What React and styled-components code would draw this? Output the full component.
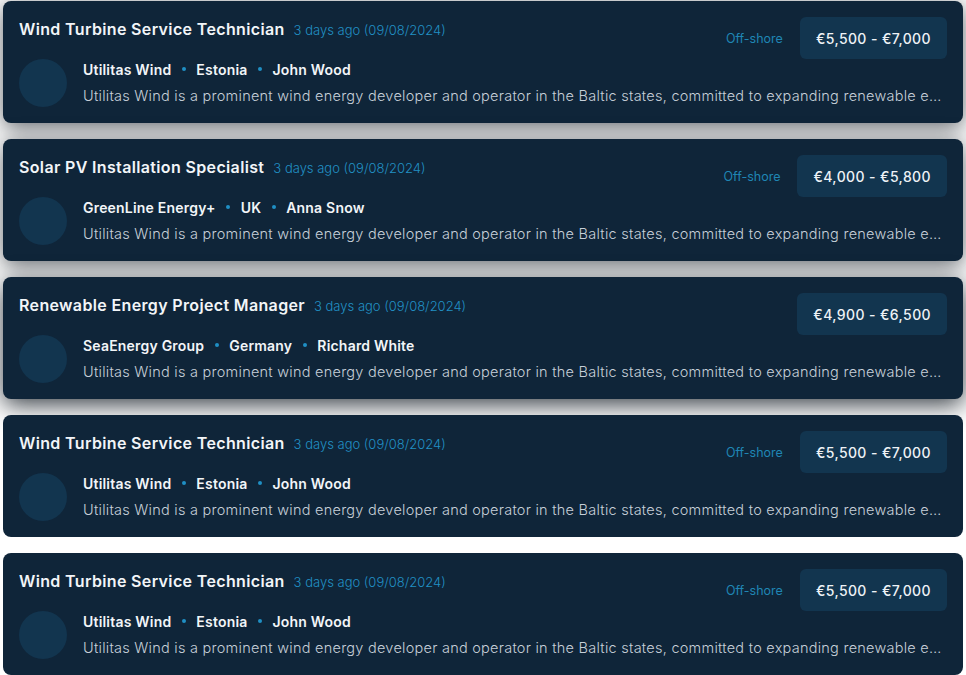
import React from "react";
import styled, { createGlobalStyle, css } from "styled-components";

const GlobalStyle = createGlobalStyle`
	* {
		box-sizing: border-box;
	}
	body {
		margin: 0;
		background: #ffffff;
		font-family: "Inter", "Noto Sans", sans-serif;
	}
`;

const ListStyled = styled.div`
	display: flex;
	flex-direction: column;
	gap: 16px;
	padding: 1px 3px 0;
`;

const shadows = {
	soft: css`
		box-shadow: 0 4px 22px rgba(20, 28, 36, 0.68);
	`,
	strong: css`
		box-shadow: 0 6px 24px rgba(20, 28, 36, 0.85);
	`,
};

const CardStyled = styled.div`
	position: relative;
	height: 122px;
	padding: 16px;
	border-radius: 8px;
	background: #0f2539;
	display: flex;
	flex-direction: column;
	${({ $shadow }) => shadows[$shadow]}
`;

const HeaderStyled = styled.div`
	display: flex;
	justify-content: space-between;
	align-items: flex-start;
	height: 42px;
`;

const TitleGroup = styled.div`
	display: flex;
	align-items: baseline;
	gap: 9px;
	height: 24px;
	line-height: 24px;
`;

const Title = styled.h3`
	margin: 0;
	font-size: 16px;
	font-weight: 600;
	letter-spacing: 0.35px;
	color: #f2f5f8;
`;

const Posted = styled.span`
	font-size: 13px;
	font-weight: 300;
	color: #2190c4;
`;

const Aside = styled.div`
	display: flex;
	align-items: center;
	gap: 17px;
`;

const Tag = styled.span`
	font-size: 12.5px;
	font-weight: 400;
	color: #1f86b4;
`;

const Salary = styled.div`
	height: 42px;
	padding: 0 16px;
	border-radius: 6px;
	background: #12354f;
	display: flex;
	align-items: center;
	font-size: 14px;
	font-weight: 500;
	letter-spacing: 0.4px;
	color: #eef2f6;
`;

const BodyStyled = styled.div`
	display: flex;
	gap: 16px;
	min-width: 0;
`;

const Avatar = styled.div`
	flex: none;
	width: 48px;
	height: 48px;
	border-radius: 50%;
	background: #12354f;
`;

const Info = styled.div`
	flex: 1;
	min-width: 0;
	display: flex;
	flex-direction: column;
	gap: 7px;
`;

const Meta = styled.div`
	display: flex;
	align-items: center;
	gap: 10.5px;
	height: 20px;
	font-size: 14px;
	font-weight: 600;
	letter-spacing: 0.2px;
	color: #f2f5f8;
`;

const Dot = styled.span`
	width: 4px;
	height: 4px;
	border-radius: 50%;
	background: #1f8fc4;
`;

const Description = styled.p`
	margin: 0;
	font-size: 14.5px;
	font-weight: 300;
	letter-spacing: 0.25px;
	line-height: 20px;
	color: #c6cfd8;
	white-space: nowrap;
	overflow: hidden;
	text-overflow: ellipsis;
`;

const DESC =
	"Utilitas Wind is a prominent wind energy developer and operator in the Baltic states, committed to expanding renewable energy capacity across the region.";

const jobs = [
	{
		id: 1,
		title: "Wind Turbine Service Technician",
		company: "Utilitas Wind",
		country: "Estonia",
		contact: "John Wood",
		tag: "Off-shore",
		salary: "€5,500 - €7,000",
		shadow: "soft",
	},
	{
		id: 2,
		title: "Solar PV Installation Specialist",
		company: "GreenLine Energy+",
		country: "UK",
		contact: "Anna Snow",
		tag: "Off-shore",
		salary: "€4,000 - €5,800",
		shadow: "soft",
	},
	{
		id: 3,
		title: "Renewable Energy Project Manager",
		company: "SeaEnergy Group",
		country: "Germany",
		contact: "Richard White",
		salary: "€4,900 - €6,500",
		shadow: "strong",
	},
	{
		id: 4,
		title: "Wind Turbine Service Technician",
		company: "Utilitas Wind",
		country: "Estonia",
		contact: "John Wood",
		tag: "Off-shore",
		salary: "€5,500 - €7,000",
	},
	{
		id: 5,
		title: "Wind Turbine Service Technician",
		company: "Utilitas Wind",
		country: "Estonia",
		contact: "John Wood",
		tag: "Off-shore",
		salary: "€5,500 - €7,000",
	},
];

const JobCard = ({ job }) => (
	<CardStyled $shadow={job.shadow}>
		<HeaderStyled>
			<TitleGroup>
				<Title>{job.title}</Title>
				<Posted>3 days ago (09/08/2024)</Posted>
			</TitleGroup>
			<Aside>
				{job.tag && <Tag>{job.tag}</Tag>}
				<Salary>{job.salary}</Salary>
			</Aside>
		</HeaderStyled>
		<BodyStyled>
			<Avatar />
			<Info>
				<Meta>
					<span>{job.company}</span>
					<Dot />
					<span>{job.country}</span>
					<Dot />
					<span>{job.contact}</span>
				</Meta>
				<Description>{DESC}</Description>
			</Info>
		</BodyStyled>
	</CardStyled>
);

export default function App() {
	return (
		<>
			<GlobalStyle />
			<ListStyled>
				{jobs.map((job) => (
					<JobCard key={job.id} job={job} />
				))}
			</ListStyled>
		</>
	);
}
